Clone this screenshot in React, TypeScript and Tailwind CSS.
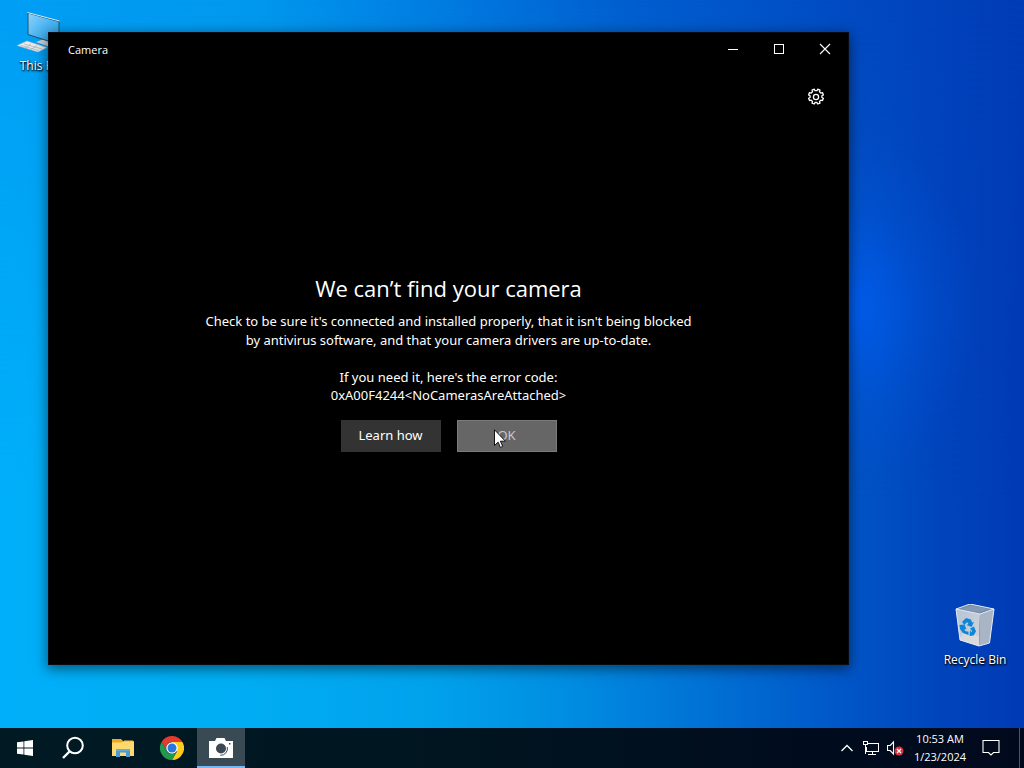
import React from "react";

function Wallpaper() {
  return (
    <div className="absolute inset-0 overflow-hidden bg-[linear-gradient(90deg,#009ff5_0%,#0098ee_25%,#007de2_42%,#0060d0_60%,#004fc6_78%,#0042bc_92%,#003cb6_100%)]">
      <div className="absolute inset-0 bg-[linear-gradient(90deg,#00aff9_0%,#00aef4_22%,#00a2ec_42%,#008ee2_55%,#006fd4_70%,#0057c8_82%,#0044bc_92%,#003ab4_100%)] [mask-image:linear-gradient(180deg,transparent_0%,#000_65%)]" />
      <div className="absolute inset-0 bg-[radial-gradient(ellipse_130px_170px_at_83%_40%,#005cec_0%,#005cec90_30%,#005cec38_60%,#005cec00_100%)]" />
    </div>
  );
}

function ComputerIcon() {
  return (
    <svg viewBox="0 0 48 48" className="size-12" aria-hidden="true">
      <defs>
        <linearGradient id="screen" x1="0" y1="0" x2="1" y2="1">
          <stop offset="0" stopColor="#8fd3fa" />
          <stop offset="0.5" stopColor="#4bb5f3" />
          <stop offset="1" stopColor="#2a9fe8" />
        </linearGradient>
      </defs>
      <path d="M20 32l8-3 12 5-6 3z" fill="#c9d6de" />
      <path d="M12 3l31 8.500v23L12 24.500z" fill="url(#screen)" stroke="#21506e" strokeWidth="1" />
      <path d="M11.500 2.500l32 8.500" stroke="#d7edf8" strokeWidth="1" fill="none" />
      <path d="M1 35.500L11 31l20 6.500-9 4.500z" fill="#e9edf0" stroke="#a9b6bf" strokeWidth="0.600" />
      <path d="M5 35.500l18 5M8 34l18 5M9 38l6-4M15 39.500l6-4" stroke="#a7a9b0" strokeWidth="0.700" />
    </svg>
  );
}

function RecycleBinIcon() {
  return (
    <svg viewBox="0 3 48 48" className="size-12" aria-hidden="true">
      <defs>
        <linearGradient id="bin" x1="0" y1="0" x2="1" y2="1">
          <stop offset="0" stopColor="#b3c4d8" />
          <stop offset="1" stopColor="#d4d5d9" />
        </linearGradient>
      </defs>
      <path d="M5 8l14-5 24 5-14 5z" fill="#7189a8" />
      <path d="M9 8l11-3.500L38 8l-10 3.500z" fill="#8298b3" />
      <path d="M5 8l24 5-1 32-19-6z" fill="url(#bin)" />
      <path d="M29 13l14-5-4.500 34L28 45z" fill="#a9b4c5" />
      <path d="M9 37l3-5 9 1 7 3v9l-19-6z" fill="#dfdedd" opacity="0.700" />
      <path d="M5 8l14-5 24 5-14 5zM5 8l4 31 19 6 10.500-3L43 8" fill="none" stroke="#e3edf5" strokeWidth="1" />
      <g fill="#0e86d8">
        <path d="M11 21l4-4 5 1.500 1 3 2-.500-2.500 5-5-2 2-1-1.500-2-2.500 3z" />
        <path d="M8.500 24l5-.500 2 5-2-.500.500 2 3.500.800V34l-5.500-2-3-4z" />
        <path d="M19 29l-.500 6 4-.500 2.500-4-2-5-4 2 2 2.500-.500 1.500z" />
      </g>
    </svg>
  );
}

function DesktopShortcut({ label, children }: { label: string; children: React.ReactNode }) {
  return (
    <button type="button" className="flex w-[76px] flex-col items-center text-xs leading-4 whitespace-nowrap text-white [text-shadow:0_1px_2px_#000,1px_1px_2px_#000]">
      {children}
      <span>{label}</span>
    </button>
  );
}

function GearIcon() {
  return (
    <svg viewBox="0 0 18 18" className="size-[18px]" fill="none" stroke="#fff" strokeWidth="1.300" aria-hidden="true">
      <path
        strokeLinejoin="round"
        d="M7.300 1.200l.7 1.500h2l.7-1.500 2.300.9-.5 1.600 1.400 1.400 1.600-.5.900 2.300-1.500.8v1.800l1.500.8-.9 2.300-1.600-.5-1.400 1.400.5 1.600-2.300.9-.7-1.500H8l-.7 1.500-2.300-.9.5-1.600-1.400-1.400-1.600.5-.9-2.300 1.500-.8V7.700l-1.500-.8.9-2.300 1.600.5 1.400-1.400L5 2.100z"
      />
      <circle cx="9" cy="9" r="2.600" />
    </svg>
  );
}

function CameraWindow() {
  return (
    <main className="absolute top-8 right-[175px] bottom-[63px] left-12 flex flex-col border border-[#080c12] bg-black text-white shadow-[0_3px_12px_1px_rgba(0,0,0,0.5)]">
      <header className="flex h-8 shrink-0 items-center justify-between pl-[19px]">
        <h1 className="pt-0.5 text-[11px] leading-4">Camera</h1>
        <div className="flex h-full">
          <button type="button" aria-label="Minimize" className="grid w-[46px] place-items-center">
            <svg viewBox="0 0 12 12" className="size-3" stroke="#fff" shapeRendering="crispEdges"><path d="M1 6.500h10" /></svg>
          </button>
          <button type="button" aria-label="Maximize" className="grid w-[46px] place-items-center">
            <svg viewBox="0 0 12 12" className="size-3" fill="none" stroke="#fff" shapeRendering="crispEdges"><path d="M1.500 1.500h9v9h-9z" /></svg>
          </button>
          <button type="button" aria-label="Close" className="grid w-[46px] place-items-center">
            <svg viewBox="0 0 12 12" className="size-3" stroke="#fff" strokeWidth="1.100"><path d="M1 1l10 10M11 1L1 11" /></svg>
          </button>
        </div>
      </header>
      <div className="flex flex-1 flex-col">
        <div className="flex h-0 justify-end pr-3">
          <button type="button" aria-label="Settings" className="mt-3 grid size-10 shrink-0 place-items-center">
            <GearIcon />
          </button>
        </div>
        <section className="flex flex-1 flex-col items-center justify-center pb-1.5 text-center font-['Noto_Sans',sans-serif]">
          <h2 className="font-['Open_Sans','Noto_Sans',sans-serif] text-[22px] leading-8">We can’t find your camera</h2>
          <p className="mt-2 text-[13px] leading-[19px]">
            Check to be sure it's connected and installed properly, that it isn't being blocked
            <br />
            by antivirus software, and that your camera drivers are up-to-date.
          </p>
          <p className="mt-[18px] text-[13px] leading-[18px]">
            If you need it, here's the error code:
            <br />
            0xA00F4244&lt;NoCamerasAreAttached&gt;
          </p>
          <div className="mt-4 flex gap-4 text-[13px]">
            <button type="button" className="h-8 w-25 bg-[#333333]">Learn how</button>
            <button type="button" className="relative h-8 w-25 border border-[#7b7b7b] bg-[#666666] text-[#c8c8c8]">
              OK
              <svg viewBox="0 0 12 19" className="absolute top-2 left-9 h-[19px] w-3" aria-hidden="true">
                <path d="M.500.800v15.700l3.600-3.400 2.300 5.300 2.300-1-2.300-5.200h5z" fill="#fff" stroke="#000" strokeWidth="0.900" />
              </svg>
            </button>
          </div>
        </section>
      </div>
    </main>
  );
}

function TaskButton({ label, active, children }: { label: string; active?: boolean; children: React.ReactNode }) {
  return (
    <button
      type="button"
      aria-label={label}
      className={
        active
          ? "grid w-12 place-items-center border-b-2 border-[#78b8f2] bg-[#3a4a54] pt-0.5"
          : "grid w-12 place-items-center"
      }
    >
      {children}
    </button>
  );
}

function Taskbar() {
  return (
    <footer className="relative flex h-10 shrink-0 justify-between bg-[linear-gradient(90deg,#001a24_0%,#001620_40%,#000d1e_75%,#000a1c_100%)] text-white">
      <nav className="flex gap-px pl-px" aria-label="Taskbar">
        <TaskButton label="Start">
          <svg viewBox="0 0 16 16" className="size-4" fill="#fff"><path d="M0 2.300l6.500-.9v6.200H0zM7.300 1.300L16 0v7.600H7.300zM0 8.400h6.500v6.200L0 13.700zM7.300 8.400H16V16l-8.700-1.300z" /></svg>
        </TaskButton>
        <TaskButton label="Search">
          <svg viewBox="0 0 24 24" className="size-6" fill="none" stroke="#fff" strokeWidth="2"><circle cx="13" cy="9.500" r="7.800" /><path d="M7.500 15.500L1 22" strokeWidth="2.400" /></svg>
        </TaskButton>
        <TaskButton label="File Explorer">
          <svg viewBox="0 0 22 18" className="h-[18px] w-[22px]">
            <path d="M0 0h9l2 2h11v15H0z" fill="#e9a92b" />
            <path d="M0 3.500h9L11 3h11v14H0z" fill="#ffd96b" />
            <path d="M12 1.500h9V3h-9z" fill="#f6c64f" />
            <path d="M4 10h14v8h-4v-4.500H8V18H4z" fill="#4a9bd4" />
            <path d="M4 10h14v2H4z" fill="#5faee0" />
          </svg>
        </TaskButton>
        <TaskButton label="Chrome">
          <svg viewBox="0 0 24 24" className="size-6">
            <path d="M22.400 6A12 12 0 0 1 12 24l5.200-9L12 6z" fill="#fdcc1c" />
            <path d="M1.600 6A12 12 0 0 1 22.400 6H12a6 6 0 0 0-5.200 9z" fill="#e33b2e" />
            <path d="M1.600 6l5.200 9A6 6 0 0 0 17.200 15L12 24A12 12 0 0 1 1.600 6z" fill="#219a4e" />
            <circle cx="12" cy="12" r="5.800" fill="#fff" />
            <circle cx="12" cy="12" r="4.500" fill="#2878e0" />
          </svg>
        </TaskButton>
        <TaskButton label="Camera" active>
          <svg viewBox="0 0 24 20" className="h-5 w-6">
            <path d="M0 3h6l1.500-3h8L17 3h7v17H0z" fill="#fff" />
            <circle cx="12" cy="10.500" r="5" fill="#3a4a54" />
            <path d="M18.300 9a6.800 6.800 0 0 1-7 8.300" fill="none" stroke="#3a4a54" strokeWidth="1" />
            <path d="M20 5h1.500v1.500H20z" fill="#3a4a54" />
          </svg>
        </TaskButton>
      </nav>
      <div className="flex">
        <button type="button" aria-label="Show hidden icons" className="grid w-6 place-items-center">
          <svg viewBox="0 0 12 8" className="h-2 w-3" fill="none" stroke="#fff" strokeWidth="1.300"><path d="M.500 7L6 1.500 11.500 7" /></svg>
        </button>
        <button type="button" aria-label="Network" className="grid w-6 place-items-center">
          <svg viewBox="0 0 16 14" className="h-[14px] w-4" fill="none" stroke="#fff" shapeRendering="crispEdges">
            <path d="M5 2.500h10.500v8H3.500V6M.500.500h4v3h-4zM2.500 3.500V13M9.500 10.500v3M5 13.500h8" />
          </svg>
        </button>
        <button type="button" aria-label="Volume" className="grid w-6 place-items-center">
          <svg viewBox="0 0 17 16" className="h-4 w-[17px]">
            <path d="M.500 5.500h2.700L6.500 2v12L3.200 10.500H.500z" fill="none" stroke="#fff" strokeWidth="1.100" />
            <circle cx="12" cy="11" r="4.500" fill="#d8323a" />
            <path d="M10 9l4 4M14 9l-4 4" stroke="#fff" strokeWidth="1.200" />
          </svg>
        </button>
        <button type="button" className="w-[66px] text-center text-[11px] leading-[18px]">
          <time dateTime="2024-01-23T10:53" className="block">10:53 AM<br />1/23/2024</time>
        </button>
        <button type="button" aria-label="Notifications" className="grid w-9 place-items-center">
          <svg viewBox="0 0 18 16" className="h-4 w-[18px]" fill="none" stroke="#fff" strokeWidth="1.100"><path d="M1 .500h16v12h-5.500L9 15l-2.500-2.500H1z" /></svg>
        </button>
        <button type="button" aria-label="Show desktop" className="ml-2.5 w-[5px] border-l border-[#4a5668]" />
      </div>
    </footer>
  );
}

export default function App() {
  return (
    <div className="relative flex min-h-screen flex-col overflow-hidden font-['Open_Sans','Noto_Sans',sans-serif]">
      <Wallpaper />
      <div className="relative flex flex-1 items-start justify-between">
        <div className="pt-2.5 pl-0.5">
          <DesktopShortcut label="This PC"><ComputerIcon /></DesktopShortcut>
        </div>
        <div className="self-end pr-[11px] pb-[60px]">
          <DesktopShortcut label="Recycle Bin"><RecycleBinIcon /></DesktopShortcut>
        </div>
        <CameraWindow />
      </div>
      <Taskbar />
    </div>
  );
}
